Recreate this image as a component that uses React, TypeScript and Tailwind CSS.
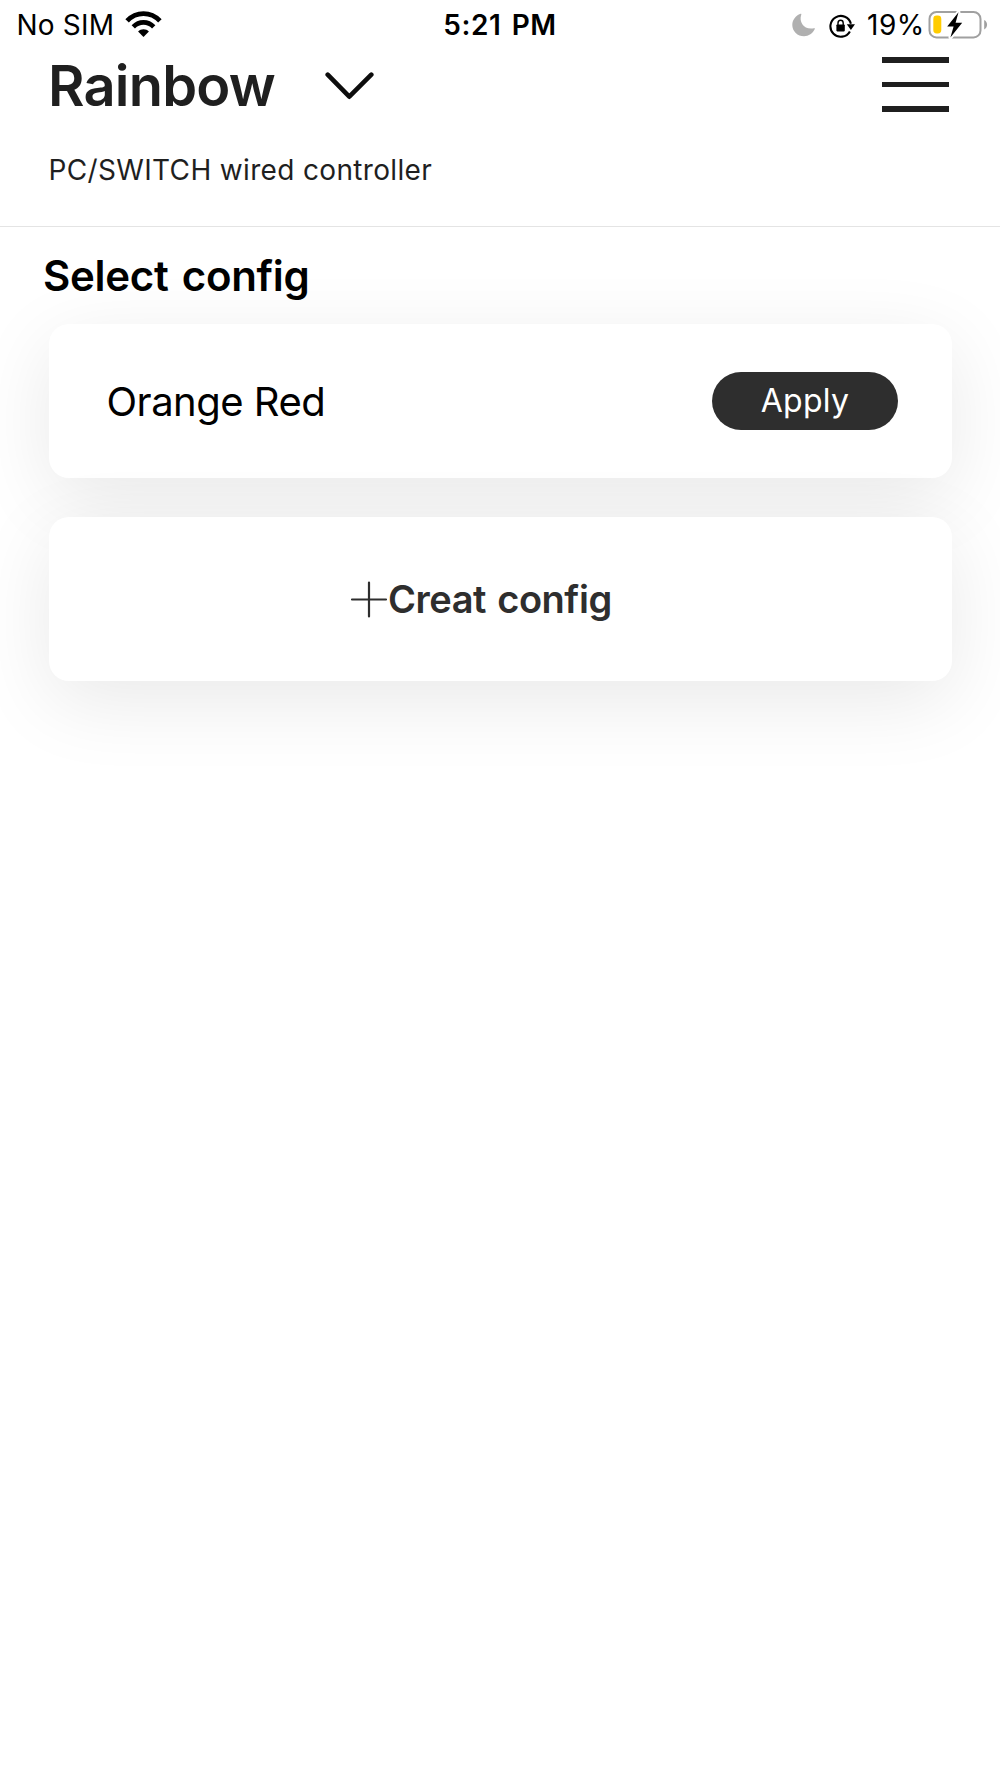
import React from 'react';

function WifiIcon() {
  return (
    <svg width="37" height="27" viewBox="0 0 38 28" fill="none" stroke="#000" className="-mt-[2px]">
      <path d="M2 10.2C11.5 0.2 26.5 0.2 36 10.2" strokeWidth="5" />
      <path d="M8.4 16.4C14.4 10.2 23.6 10.2 29.6 16.4" strokeWidth="4.8" />
      <path d="M13.4 21.3C16.3 18.2 21.7 18.2 24.6 21.3L19 27Z" fill="#000" stroke="none" />
    </svg>
  );
}

function MoonIcon() {
  return (
    <svg width="24" height="24" viewBox="0 0 24 24" fill="#b0b0b0" className="-mt-px">
      <path d="M8.6 0.8C9.3 0.4 9.6 0.8 9.3 1.5C6.5 9.5 12.5 17.2 21.9 15.3C22.8 15.1 23.1 15.5 22.8 16.1C20.8 20.6 16.7 23.3 12 23.3C5.6 23.3 0.3 18.3 0.3 12C0.3 7 3.6 2.6 8.6 0.8Z" />
    </svg>
  );
}

function RotationLockIcon() {
  return (
    <svg width="26" height="24" viewBox="0 0 26 24" fill="none" stroke="#000">
      <path d="M20.9 17.4A10.4 10.4 0 1 1 21.9 9.8" strokeWidth="2.1" />
      <path d="M17.8 10.3H26L21.9 16Z" fill="#000" stroke="none" />
      <rect x="7.4" y="10.4" width="8.4" height="7" rx="0.8" fill="#000" stroke="none" />
      <path d="M9 11V9A2.6 2.8 0 0 1 14.2 9V11" strokeWidth="1.4" />
    </svg>
  );
}

function BatteryIcon() {
  return (
    <svg width="60" height="30" viewBox="0 0 60 30" fill="none" className="-mt-[2px]">
      <rect x="1.5" y="2" width="51" height="25.4" rx="7" stroke="#a0a0a0" strokeWidth="2" />
      <path d="M56.2 10C60 11.8 60 17.6 56.2 19.4Z" fill="#a0a0a0" />
      <rect x="5.3" y="5.6" width="8" height="17.8" rx="3.4" fill="#ffcc00" />
      <path d="M30.5 2.3L19.2 16.4H25.6L22.4 27.4L34.2 12.8H27.6Z" fill="#000" stroke="#fff" strokeWidth="4" strokeLinejoin="round" />
      <path d="M30.5 2.3L19.2 16.4H25.6L22.4 27.4L34.2 12.8H27.6Z" fill="#000" />
    </svg>
  );
}

function StatusBar() {
  return (
    <div className="grid grid-cols-3 items-center h-[50px] text-[28px] leading-[51px] text-black">
      <div className="flex items-center pl-[16.5px]">
        <span className="w-[108.5px] whitespace-nowrap tracking-[0.2px]">No SIM</span>
        <WifiIcon />
      </div>
      <div className="text-center font-semibold tracking-[0.6px] [word-spacing:2.5px]">5:21 PM</div>
      <div className="flex items-center justify-end pr-[12px]">
        <MoonIcon />
        <span className="w-[13px]" />
        <RotationLockIcon />
        <span className="w-[73px] pl-[12px] whitespace-nowrap tracking-[0.5px]">19%</span>
        <BatteryIcon />
      </div>
    </div>
  );
}

function Header() {
  return (
    <header className="h-[177px] border-b border-[#e4e4e4] pl-12 pr-[51px] text-[#1f1f1f]">
      <div className="flex items-center h-[70px]">
        <h1 className="w-[276px] text-[56px] leading-[70px] pt-px font-semibold tracking-[-0.8px]">Rainbow</h1>
        <svg width="50" height="30" viewBox="0 0 50 30" fill="none" className="mt-px">
          <path d="M3.7 3.7L25.3 25.7L47.3 3.7" stroke="#0d0d0d" strokeWidth="4.6" strokeLinecap="round" strokeLinejoin="round" />
        </svg>
        <button className="ml-auto -mt-px flex flex-col gap-[19px]">
          <span className="block w-[67px] h-[5.5px] bg-[#1f1f1f]" />
          <span className="block w-[67px] h-[5.5px] bg-[#1f1f1f]" />
          <span className="block w-[67px] h-[5.5px] bg-[#1f1f1f]" />
        </button>
      </div>
      <p className="pl-[0.5px] text-[28px] leading-[100px] tracking-[0.34px]">PC/SWITCH wired controller</p>
    </header>
  );
}

const CONFIGS = ['Orange Red'];

export default function App() {
  return (
    <div className="w-[1000px] h-[1778px] overflow-hidden bg-white font-['Inter',sans-serif]">
      <StatusBar />
      <Header />

      <main className="px-[48.5px]">
        <h2 className="-ml-[5.5px] text-[42px] leading-[97px] font-semibold tracking-[-0.3px] [word-spacing:3px] text-black">
          Select config
        </h2>

        <div className="flex flex-col gap-[39px]">
          {CONFIGS.map((name) => (
            <div
              key={name}
              className="flex items-center justify-between h-[154px] pl-[58px] pr-[53.5px] rounded-[20px] bg-white shadow-[0_20px_80px_rgba(0,0,0,0.09)]"
            >
              <span className="pt-[2px] text-[40px] leading-[152px] tracking-[-0.5px] text-black">{name}</span>
              <button className="w-[186px] h-[58px] -mt-px rounded-full bg-[#2e2e2e] text-[32px] leading-[58px] tracking-[0.3px] text-white">
                Apply
              </button>
            </div>
          ))}

          <button className="flex items-center h-[164px] pl-[301.5px] rounded-[20px] bg-white text-[#2e2e2e] shadow-[0_20px_80px_rgba(0,0,0,0.09)]">
            <svg width="38" height="38" viewBox="0 0 38 38" stroke="#2e2e2e" strokeWidth="2.2" strokeLinecap="round">
              <path d="M2 19.5H36M19 2.5V36.5" />
            </svg>
            <span className="pt-px text-[38px] leading-[163px] font-semibold tracking-[-0.45px] [word-spacing:2px] whitespace-nowrap">
              Creat config
            </span>
          </button>
        </div>
      </main>
    </div>
  );
}
